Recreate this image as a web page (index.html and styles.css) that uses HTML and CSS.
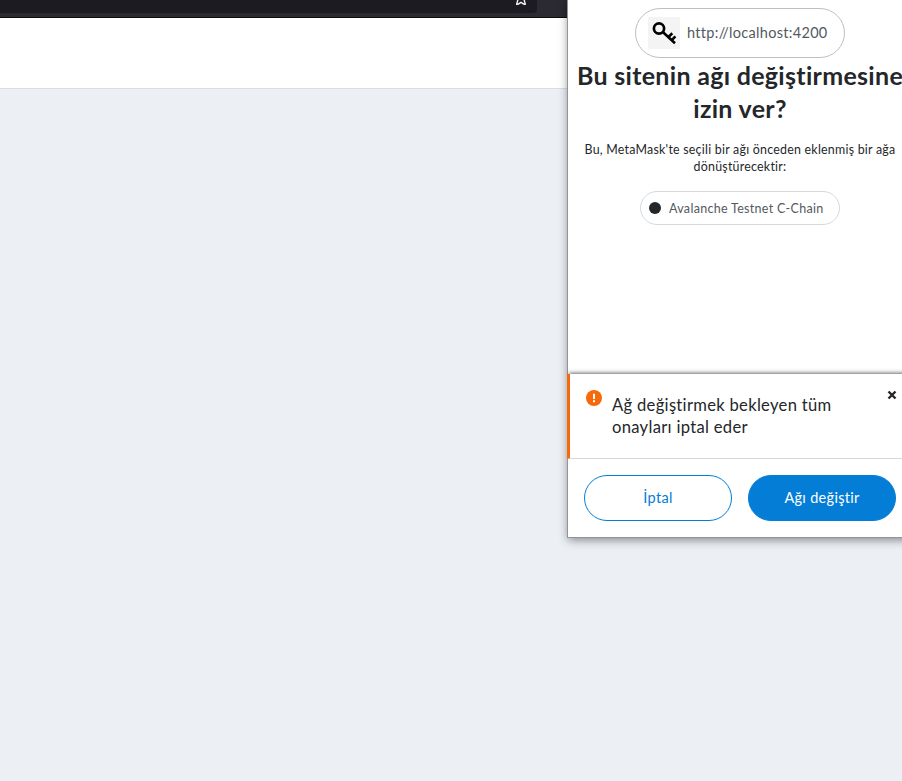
FILE: index.html
```html
<!DOCTYPE html>
<html lang="tr">
<head>
<meta charset="utf-8">
<title>MetaMask</title>
<link rel="stylesheet" href="styles.css">
</head>
<body>
<header class="browser-bar">
  <div class="address-field">
    <svg class="bookmark" width="12" height="12" viewBox="0 0 12 12"><path d="M6 1 7.5 4.1 11 4.6 9.2 7.4 10.4 11.2H8.8L6 9.3 3.2 11.2H1.6L2.8 7.4 1 4.6 4.5 4.1Z" fill="none" stroke="#f4f4f7" stroke-width="1.4" stroke-linejoin="round"/></svg>
  </div>
</header>
<div class="page-header"></div>
<aside class="popup">
  <main class="content">
    <div class="site">
      <span class="site-icon"><svg width="32" height="32" viewBox="0 0 32 32" fill="none" stroke="#000"><circle cx="11" cy="11.5" r="5.1" stroke-width="2.7"/><path d="M14.8 15 27 26.2M20.5 20l3.8-3.7M23.7 23.2l3.7-3.8" stroke-width="2.6"/></svg></span>
      <span class="site-url">http://localhost:4200</span>
    </div>
    <h1>Bu sitenin ağı değiştirmesine<br>izin ver?</h1>
    <p class="description">Bu, MetaMask'te seçili bir ağı önceden eklenmiş bir ağa<br>dönüştürecektir:</p>
    <div class="network"><i class="dot"></i><span>Avalanche Testnet C-Chain</span></div>
  </main>
  <section class="alert">
    <svg class="warning" width="16" height="16" viewBox="0 0 16 16"><circle cx="8" cy="8" r="8" fill="#f66a0a"/><path d="M7 3.8h2V9H7zM7 10.2h2v2H7z" fill="#fff"/></svg>
    <p>Ağ değiştirmek bekleyen tüm<br>onayları iptal eder</p>
    <svg class="close" width="10" height="10" viewBox="0 0 10 10"><path d="M1.5 1.5 8.5 8.5M8.5 1.5 1.5 8.5" stroke="#24272a" stroke-width="2.4"/></svg>
  </section>
  <footer class="actions">
    <button class="cancel">İptal</button>
    <button class="confirm">Ağı değiştir</button>
  </footer>
</aside>
</body>
</html>
```
FILE: styles.css
```css
* { box-sizing: border-box; }
body { margin: 0; width: 902px; height: 781px; overflow: hidden; position: relative; background: #ecf0f5; font-family: Lato, "Liberation Sans", sans-serif; color: #24272a; }
.browser-bar { height: 18px; background: #2b2a33; border-bottom: 1px solid #0c0c0d; }
.address-field { width: 537px; height: 13px; background: #1c1b22; border-radius: 0 0 4px; display: flex; justify-content: flex-end; padding-right: 10px; }
.bookmark { margin-top: -7px; }
.page-header { height: 71px; background: #fff; border-bottom: 1px solid #d9dde1; }
.popup { position: absolute; left: 567px; top: -1px; width: 346px; height: 539px; background: #fff; border: 1px solid #929496; box-shadow: 1px 2px 9px rgba(0,0,0,.45); display: flex; flex-direction: column; }
.content { height: 374px; padding-top: 8px; display: flex; flex-direction: column; align-items: center; text-align: center; }
.site { width: 210px; height: 50px; border: 1px solid #bbc0c5; border-radius: 25px; display: flex; align-items: center; padding-left: 12px; flex: none; }
.site-icon { width: 32px; height: 32px; background: #f4f4f4; margin-right: 7px; }
.site-url { font-size: 14.5px; color: #535a61; letter-spacing: .3px; white-space: nowrap; padding-bottom: 2px; }
h1 { margin: 1px 0 0; font-size: 25px; line-height: 33px; font-weight: 700; letter-spacing: .3px; white-space: nowrap; }
.description { margin: 16px 0 0; font-size: 12.4px; line-height: 17px; letter-spacing: .24px; white-space: nowrap; }
.network { width: 200px; height: 34px; margin-top: 16px; border: 1px solid #d6d9dc; border-radius: 17px; display: flex; align-items: center; padding-left: 8px; color: #535a61; font-size: 12.5px; letter-spacing: .3px; white-space: nowrap; }
.dot { width: 12px; height: 12px; background: #24272a; border-radius: 50%; margin-right: 8px; }
.alert { height: 85px; margin-left: -1px; border-left: 3px solid #f66a0a; border-bottom: 1px solid #d6d9dc; background: #fff; box-shadow: 2px -1px 4px rgba(0,0,0,.6); clip-path: inset(-8px 0 0); display: flex; padding: 16px 15px 0 16px; }
.warning { flex: none; margin-right: 10px; }
.alert p { margin: 4px 0 0; font-size: 16.6px; line-height: 22px; letter-spacing: .3px; white-space: nowrap; }
.close { margin: 0 0 0 auto; }
.actions { padding: 16px; display: flex; gap: 16px; }
button { width: 148px; height: 46px; padding: 0 0 2px; border: 1px solid #037dd6; border-radius: 23px; font: 14.5px Lato, "Liberation Sans", sans-serif; letter-spacing: .3px; }
.cancel { background: #fff; color: #037dd6; }
.confirm { background: #037dd6; color: #fff; }
```
